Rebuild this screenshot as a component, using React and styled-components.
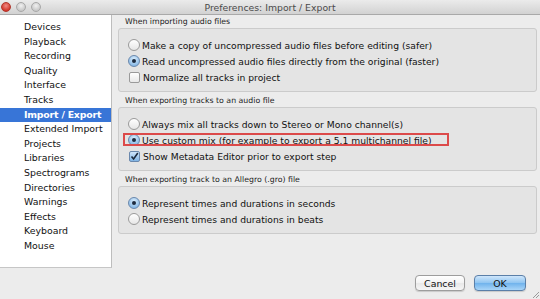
import React from "react";
import styled, { createGlobalStyle } from "styled-components";

const GlobalStyle = createGlobalStyle`
  html, body { margin: 0; padding: 0; }
  body {
    width: 540px;
    height: 299px;
    overflow: hidden;
    font-family: "DejaVu Sans", "Liberation Sans", sans-serif;
    background: #ececec;
  }
`;

const pages = [
  "Devices",
  "Playback",
  "Recording",
  "Quality",
  "Interface",
  "Tracks",
  "Import / Export",
  "Extended Import",
  "Projects",
  "Libraries",
  "Spectrograms",
  "Directories",
  "Warnings",
  "Effects",
  "Keyboard",
  "Mouse",
];

const Window = styled.div`
  width: 540px;
  height: 299px;
  display: flex;
  flex-direction: column;
  background: #ececec;
  position: relative;
`;

const TitleBar = styled.div`
  height: 14px;
  display: flex;
  align-items: center;
  position: relative;
  background: linear-gradient(#ebebeb, #d2d2d2);
  border-bottom: 1px solid #a9a9a9;
`;

const Lights = styled.div`
  display: flex;
  gap: 5px;
  padding-left: 1px;
`;

const Light = styled.span`
  width: 10px;
  height: 10px;
  border-radius: 50%;
  box-sizing: border-box;
  background: ${(p) =>
    p.$red
      ? "radial-gradient(circle at 50% 35%, #f08a83, #d2372c 70%)"
      : "radial-gradient(circle at 50% 35%, #f1f1f1, #c9c9c9 70%)"};
  border: 1px solid ${(p) => (p.$red ? "#b0352b" : "#a8a8a8")};
`;

const Title = styled.div`
  position: absolute;
  left: 0;
  right: 0;
  text-align: center;
  font-size: 9.3px;
  color: #4a4a4a;
`;

const Body = styled.div`
  display: flex;
  height: 253px;
`;

const Sidebar = styled.div`
  width: 112px;
  background: #fff;
  border-right: 1px solid #bdbdbd;
  border-bottom: 1px solid #c6c6c6;
  padding-top: 5px;
  box-sizing: border-box;
`;

const Page = styled.div`
  height: 14.6px;
  line-height: 14.6px;
  padding-left: 24px;
  font-size: 9.4px;
  color: ${(p) => (p.$active ? "#fff" : "#111")};
  font-weight: ${(p) => (p.$active ? "bold" : "normal")};
  letter-spacing: ${(p) => (p.$active ? "-0.2px" : "0")};
  background: ${(p) => (p.$active ? "#3875d7" : "transparent")};
  white-space: nowrap;
`;

const Content = styled.div`
  flex: 1;
  padding: 0 3px 0 6px;
  display: flex;
  flex-direction: column;
  gap: 2px;
`;

const Section = styled.div`
  display: flex;
  flex-direction: column;
`;

const Label = styled.div`
  height: 13px;
  line-height: 13px;
  font-size: 7.8px;
  color: #222;
  padding-left: 7px;
`;

const Group = styled.div`
  background: #e4e4e4;
  border: 1px solid #cbcbcb;
  border-radius: 3px;
  padding: 8px 0 6px 9px;
  display: flex;
  flex-direction: column;
`;

const Row = styled.div`
  height: 16px;
  display: flex;
  align-items: center;
  gap: 2px;
  font-size: 9.2px;
  color: #111;
  position: relative;
  align-self: flex-start;
  white-space: nowrap;

  ${(p) =>
    p.$marked &&
    `
    &::after {
      content: "";
      position: absolute;
      top: 1px;
      bottom: 2px;
      left: -5px;
      right: -17px;
      border: 2px solid #dc4a4a;
    }
  `}
`;

const Radio = styled.span`
  width: 12px;
  height: 12px;
  border-radius: 50%;
  box-sizing: border-box;
  display: flex;
  align-items: center;
  justify-content: center;
  border: 1px solid ${(p) => (p.$on ? "#6a88ad" : "#9a9a9a")};
  background: ${(p) =>
    p.$on
      ? "radial-gradient(circle at 50% 30%, #d8ecfc, #86b8e6 80%)"
      : "linear-gradient(#ffffff, #e6e6e6)"};

  &::before {
    content: "";
    width: 4px;
    height: 4px;
    border-radius: 50%;
    background: ${(p) => (p.$on ? "#1d2b3f" : "transparent")};
  }
`;

const Check = styled.span`
  width: 11px;
  height: 11px;
  margin: 0 1px 0 1px;
  border-radius: 2px;
  box-sizing: border-box;
  display: flex;
  align-items: center;
  justify-content: center;
  border: 1px solid ${(p) => (p.$on ? "#6a88ad" : "#9a9a9a")};
  background: ${(p) =>
    p.$on ? "linear-gradient(#cfe5fa, #80b4e4)" : "linear-gradient(#ffffff, #e8e8e8)"};
`;

const Footer = styled.div`
  flex: 1;
  display: flex;
  justify-content: flex-end;
  align-items: flex-start;
  gap: 9px;
  padding: 7px 14px 0 0;
  position: relative;
`;

const Button = styled.button`
  height: 16px;
  width: ${(p) => (p.$primary ? "52px" : "50px")};
  padding: 0;
  font-family: inherit;
  font-size: 9.4px;
  color: #111;
  border-radius: 4px;
  border: 1px solid ${(p) => (p.$primary ? "#5b7fa8" : "#9d9d9d")};
  background: ${(p) =>
    p.$primary
      ? "linear-gradient(#cfe6fb 0%, #8ec4f1 50%, #6fb2ec 51%, #a9d5f8 100%)"
      : "linear-gradient(#ffffff 0%, #f3f3f3 50%, #e8e8e8 51%, #f6f6f6 100%)"};
  box-shadow: 0 1px 1px rgba(0, 0, 0, 0.15);
`;

const Grip = styled.svg`
  position: absolute;
  right: 0;
  bottom: 0;
`;

const CheckMark = () => (
  <svg width="9" height="9" viewBox="0 0 9 9">
    <path d="M1.5 4.5 L3.6 7 L7.8 1" fill="none" stroke="#1c2a3c" strokeWidth="1.6" />
  </svg>
);

const Choice = ({ kind, on, marked, children }) => (
  <Row $marked={marked}>
    {kind === "check" ? (
      <Check $on={on}>{on && <CheckMark />}</Check>
    ) : (
      <Radio $on={on} />
    )}
    <span>{children}</span>
  </Row>
);

export default function App() {
  return (
    <Window>
      <GlobalStyle />
      <TitleBar>
        <Lights>
          <Light $red />
          <Light />
          <Light />
        </Lights>
        <Title>Preferences: Import / Export</Title>
      </TitleBar>
      <Body>
        <Sidebar>
          {pages.map((p) => (
            <Page key={p} $active={p === "Import / Export"}>
              {p}
            </Page>
          ))}
        </Sidebar>
        <Content>
          <Section>
            <Label>When importing audio files</Label>
            <Group>
              <Choice>Make a copy of uncompressed audio files before editing (safer)</Choice>
              <Choice on>Read uncompressed audio files directly from the original (faster)</Choice>
              <Choice kind="check">Normalize all tracks in project</Choice>
            </Group>
          </Section>
          <Section>
            <Label>When exporting tracks to an audio file</Label>
            <Group>
              <Choice>Always mix all tracks down to Stereo or Mono channel(s)</Choice>
              <Choice on marked>
                Use custom mix (for example to export a 5.1 multichannel file)
              </Choice>
              <Choice kind="check" on>
                Show Metadata Editor prior to export step
              </Choice>
            </Group>
          </Section>
          <Section>
            <Label>When exporting track to an Allegro (.gro) file</Label>
            <Group>
              <Choice on>Represent times and durations in seconds</Choice>
              <Choice>Represent times and durations in beats</Choice>
            </Group>
          </Section>
        </Content>
      </Body>
      <Footer>
        <Button>Cancel</Button>
        <Button $primary>OK</Button>
        <Grip width="9" height="9" viewBox="0 0 9 9">
          <path d="M8 2 L2 8 M8 5 L5 8" stroke="#9a9a9a" strokeWidth="1" />
        </Grip>
      </Footer>
    </Window>
  );
}
